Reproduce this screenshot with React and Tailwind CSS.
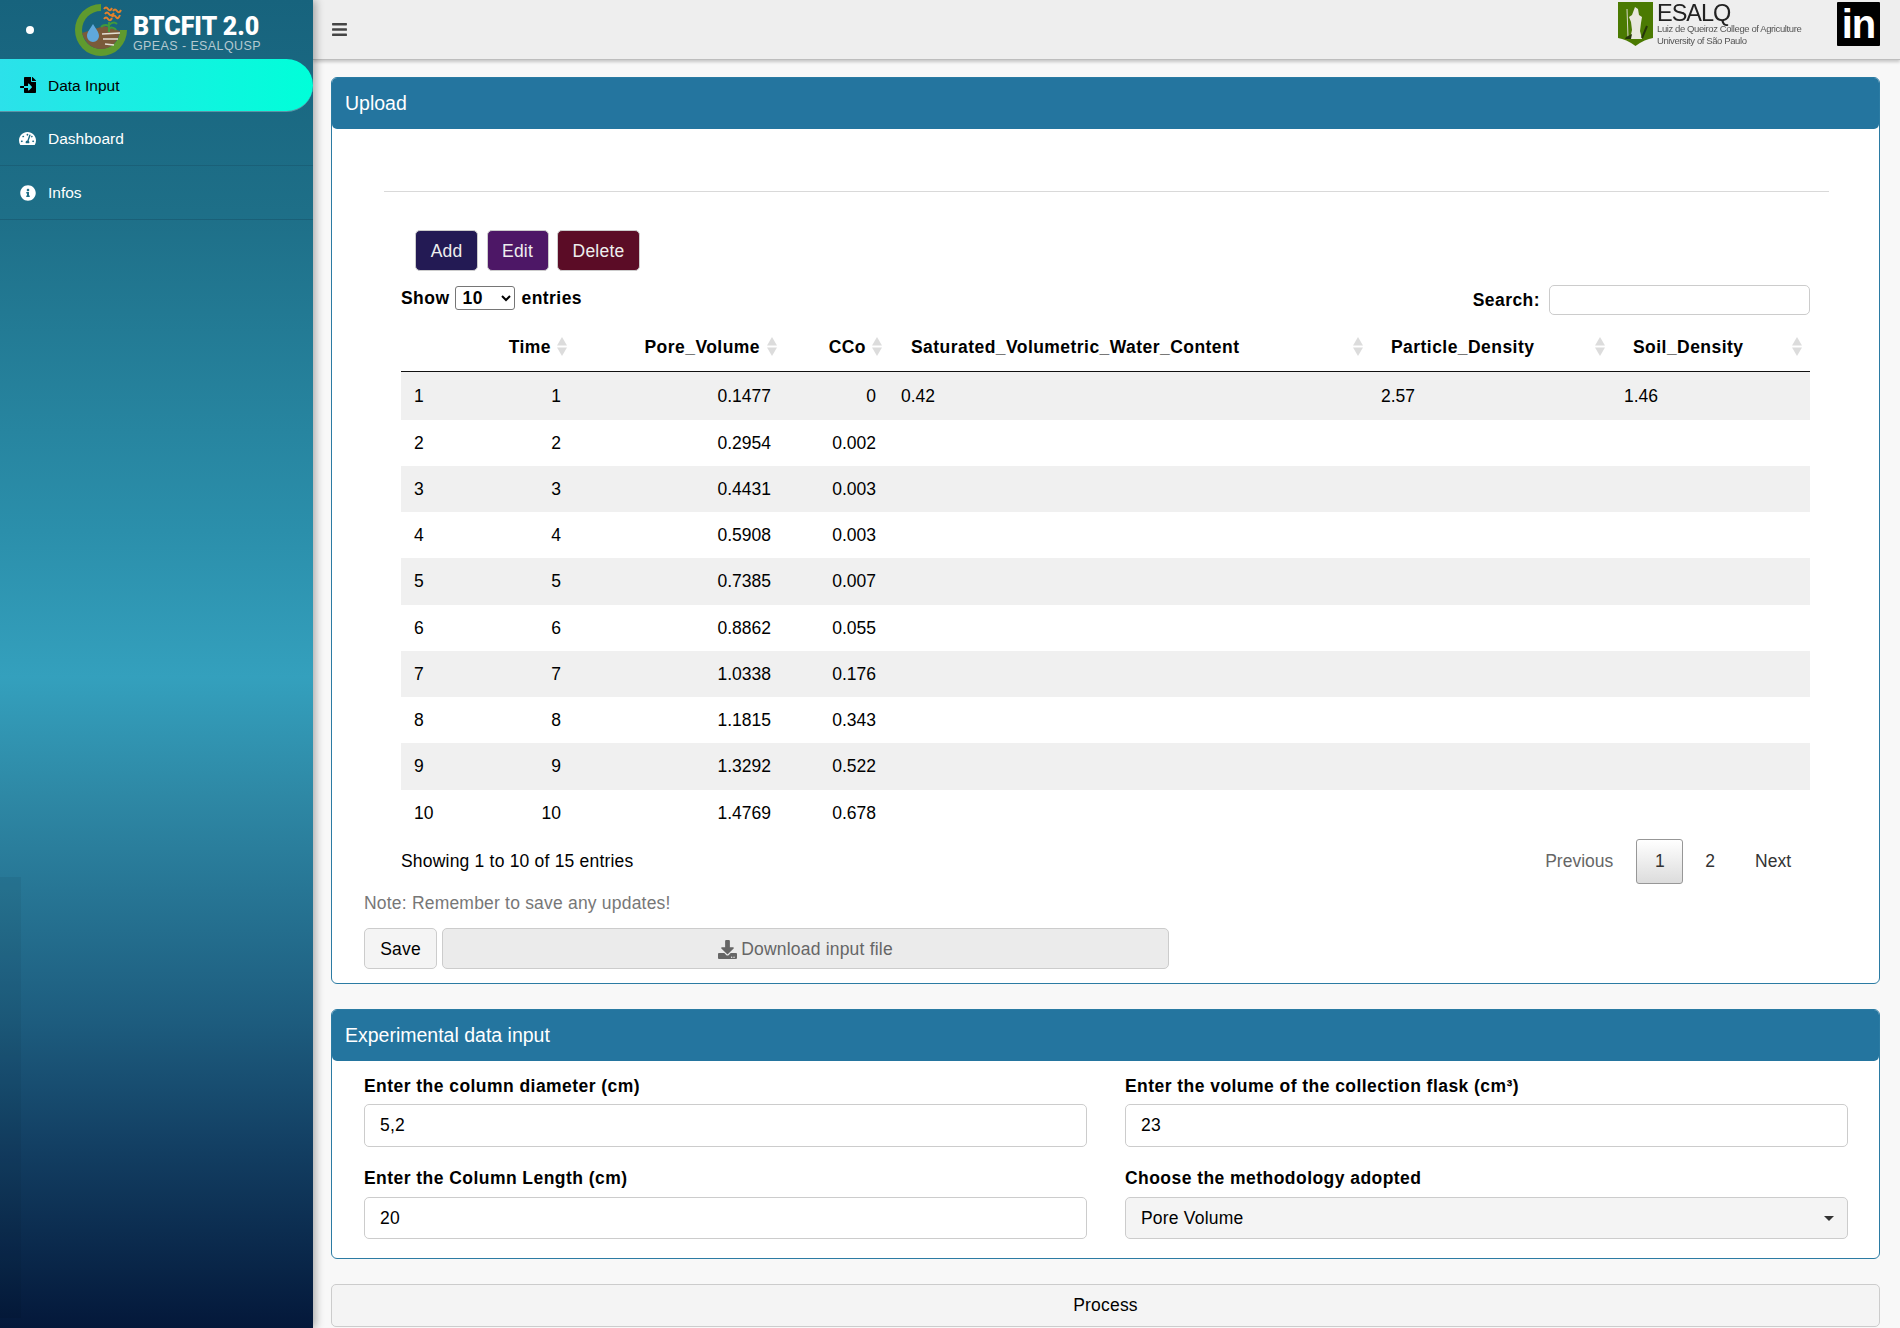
import { FaBars, FaDownload, FaFileImport, FaInfoCircle, FaTachometerAlt } from 'react-icons/fa';

const gridCols = 'grid grid-cols-[74px_100px_210px_105px_481px_242px_197px]';

const rows = [
  ['1', '1', '0.1477', '0', '0.42', '2.57', '1.46'],
  ['2', '2', '0.2954', '0.002'],
  ['3', '3', '0.4431', '0.003'],
  ['4', '4', '0.5908', '0.003'],
  ['5', '5', '0.7385', '0.007'],
  ['6', '6', '0.8862', '0.055'],
  ['7', '7', '1.0338', '0.176'],
  ['8', '8', '1.1815', '0.343'],
  ['9', '9', '1.3292', '0.522'],
  ['10', '10', '1.4769', '0.678'],
];

function BtcfitLogo() {
  return (
    <svg width="54" height="54" viewBox="0 0 54 54" fill="none">
      <path d="M27 1A26 26 0 1 0 53 27L46 27A19 19 0 1 1 27 8Z" fill="#5f9a2e" />
      <path d="M8 30L30 23L46 28C44 40 36 46 27 46C17 46 11 39 8 30Z" fill="#7a5a3a" />
      <path d="M28 31L46 30M29 36L44 36M31 41L40 42" stroke="#e4e0d4" strokeWidth="1.6" />
      <path d="M19 21C22 26 25 29 25 33A6 6 0 0 1 13 33C13 29 16 26 19 21Z" fill="#5fa8dc" />
      <path d="M35 29L35 19M35 23C31 21 29 22 27 24M35 22C38 19 41 19 43 21M35 25C38 24 41 25 42 27" stroke="#3f9a3c" strokeWidth="2" />
      <path d="M30 6Q32 3 34 6T38 5M31 11Q33 8 35 11T40 10M30 16Q32 13 34 16T38 15M39 8Q41 5 43 8T47 7M38 14Q40 11 42 14T46 12" stroke="#e5812a" strokeWidth="2" />
    </svg>
  );
}

function EsalqShield() {
  return (
    <svg width="35" height="44" viewBox="0 0 35 44">
      <path d="M0 0H35V36Q27 37 17.500 44Q8 37 0 36Z" fill="#4b7a02" />
      <path d="M17 5L20 7L21 13L24 15L23 21L22 29L24 37L12 37L14 28L13 20L11 15L14 13Z" fill="#e8e8dc" />
      <path d="M9 7L10 35" stroke="#d8d8c8" strokeWidth="1" />
      <path d="M8 35L14 32L13 37L7 37Z" fill="#26360a" />
      <path d="M24 36L29 24" stroke="#26360a" strokeWidth="2" />
    </svg>
  );
}

function SortIcon() {
  return (
    <svg className="absolute top-[11px] right-[8px]" width="10" height="19" viewBox="0 0 10 19" fill="#dcdcdc">
      <path d="M5 0L10 8.500H0Z" />
      <path d="M0 10.500H10L5 19Z" />
    </svg>
  );
}

function NavItem({ icon, label, active }) {
  if (active) {
    return (
      <div className="flex h-[53px] items-center gap-[12px] rounded-r-[27px] border-b border-[#5d93a6] bg-[linear-gradient(90deg,#2ce1ea,#00ffd9)] pl-[19px] text-black">
        <span className="flex w-[17px] justify-center">{icon}</span>
        <span className="pt-[1px]">{label}</span>
      </div>
    );
  }
  return (
    <div className="flex h-[54px] items-center gap-[12px] border-b border-[#1a6078] pl-[19px] text-white">
      <span className="flex w-[17px] justify-center">{icon}</span>
      <span className="pt-[1px]">{label}</span>
    </div>
  );
}

function Sidebar() {
  return (
    <aside className="relative z-10 h-full w-[313px] shrink-0 bg-[linear-gradient(180deg,#17637d_0%,#1e6f88_16%,#2b8fab_40%,#34a0bd_51%,#2e88a5_60%,#1d5c7e_77%,#134064_86%,#04183a_100%)] text-[15.5px] shadow-[3px_0_8px_rgba(0,0,0,0.3)]">
      <div className="flex h-[59px] items-center">
        <span className="ml-[26px] size-[8px] rounded-full bg-white" />
        <div className="ml-[40px]"><BtcfitLogo /></div>
        <div className="ml-[5px] flex flex-col pt-[8px]">
          <span className="font-['Roboto',sans-serif] text-[25px] leading-[24px] font-black text-white">BTCFIT 2.0</span>
          <span className="text-[12.5px] leading-[14px] tracking-[0.4px] text-[#b4c9d0]">GPEAS - ESALQUSP</span>
        </div>
      </div>
      <NavItem active icon={<FaFileImport size={16} />} label="Data Input" />
      <NavItem icon={<FaTachometerAlt size={17} />} label="Dashboard" />
      <NavItem icon={<FaInfoCircle size={16} />} label="Infos" />
      <div className="absolute bottom-[10px] left-0 h-[441px] w-[21px] bg-black/5" />
    </aside>
  );
}

function TopBar() {
  return (
    <header className="flex h-[60px] shrink-0 items-center border-b border-[#bdbdbd] bg-[#eeeeee] pr-[20px] pl-[18px] shadow-[0_2px_3px_rgba(0,0,0,0.2)]">
      <FaBars size={17} className="text-[#444444]" />
      <div className="ml-auto flex items-start self-start pt-[2px]">
        <EsalqShield />
        <div className="ml-[4px] flex w-[180px] flex-col text-[#555555] blur-[0.3px]">
          <span className="text-[23.5px] leading-[23px] tracking-[-1px] text-[#222222]">ESALQ</span>
          <span className="mt-[-2px] text-[9.5px] leading-[12px] tracking-[-0.4px]">Luiz de Queiroz College of Agriculture</span>
          <span className="text-[9.5px] leading-[11px] tracking-[-0.4px]">University of São Paulo</span>
        </div>
        <div className="flex h-[44px] w-[43px] items-center justify-center rounded-[1px] bg-black text-[40px] leading-[44px] font-bold tracking-[-1px] text-white">
          in
        </div>
      </div>
    </header>
  );
}

function BoxHeader({ title }) {
  return (
    <div className="flex h-[51px] items-center rounded-[5px] bg-[#24759f] pl-[13px] text-[19.5px] tracking-normal text-white">{title}</div>
  );
}

function DataTable() {
  const heads = [
    ['', ''],
    ['Time', 'justify-end pr-[24px]'],
    ['Pore_Volume', 'justify-end pr-[25px]'],
    ['CCo', 'justify-end pr-[24px]'],
    ['Saturated_Volumetric_Water_Content', 'pl-[21px]'],
    ['Particle_Density', 'pl-[20px]'],
    ['Soil_Density', 'pl-[20px]'],
  ];
  return (
    <div>
      <div className={`${gridCols} h-[46px] border-b-[1.5px] border-[#111111] font-bold tracking-[0.45px]`}>
        {heads.map(([label, cls], i) => (
          <div key={i} className={`relative flex h-[42px] items-center ${cls}`}>
            {label}
            {label && <SortIcon />}
          </div>
        ))}
      </div>
      {rows.map((row, r) => (
        <div
          key={r}
          className={`${gridCols} items-center tracking-normal ${r === 0 ? 'h-[47.5px]' : 'h-[46.25px]'} ${r % 2 === 0 ? 'bg-[#f0f0f0]' : ''}`}
        >
          <div className="pl-[13px]">{row[0]}</div>
          <div className="pr-[14px] text-right">{row[1]}</div>
          <div className="pr-[14px] text-right">{row[2]}</div>
          <div className="pr-[14px] text-right">{row[3]}</div>
          <div className="pl-[11px]">{row[4]}</div>
          <div className="pl-[10px]">{row[5]}</div>
          <div className="pl-[11px]">{row[6]}</div>
        </div>
      ))}
    </div>
  );
}

function UploadBox() {
  return (
    <section className="h-[907px] rounded-[6px] border-[1.5px] border-[#2b7ba3] bg-white">
      <BoxHeader title="Upload" />
      <hr className="mt-[62px] mr-[50px] ml-[52px] border-t border-[#d9d9d9]" />
      <div className="mt-[38px] ml-[83px] flex gap-[8.5px] text-[#eeeeee]">
        <button className="h-[41px] w-[63px] rounded-[5px] border border-[#cccccc] bg-[#231a54] pt-[2px]">Add</button>
        <button className="h-[41px] w-[62px] rounded-[5px] border border-[#cccccc] bg-[#4d1766] pt-[2px]">Edit</button>
        <button className="h-[41px] w-[83px] rounded-[5px] border border-[#cccccc] bg-[#5b0c26] pt-[2px]">Delete</button>
      </div>
      <div className="mx-[69px] w-[1409px]">
        <div className="mt-[14px] flex h-[41px] items-start justify-between font-bold tracking-[0.45px]">
          <div className="flex items-center gap-[6px]">
            Show
            <select defaultValue="10" className="h-[24px] w-[60px] rounded-[3px] border border-[#767676] bg-white pl-[2px] font-bold">
              <option>10</option>
              <option>25</option>
            </select>
            entries
          </div>
          <div className="flex items-center gap-[9px]">
            Search:
            <input className="h-[30px] w-[261px] rounded-[5px] border border-[#cccccc] bg-white" />
          </div>
        </div>
        <DataTable />
        <div className="mt-[3px] flex h-[45px] items-center justify-between">
          <span>Showing 1 to 10 of 15 entries</span>
          <div className="mr-[19px] flex items-center tracking-normal">
            <span className="text-[#666666]">Previous</span>
            <span className="ml-[23px] flex h-[45px] w-[47px] items-center justify-center rounded-[3px] border border-[#979797] bg-[linear-gradient(180deg,#ffffff,#dcdcdc)] text-[#333333]">1</span>
            <span className="ml-[22px] text-[#333333]">2</span>
            <span className="ml-[40px] text-[#333333]">Next</span>
          </div>
        </div>
      </div>
      <div className="mt-[7px] ml-[32px] h-[25px] leading-[25px] text-[#777777]">Note: Remember to save any updates!</div>
      <div className="mt-[12px] ml-[32px] flex gap-[5px]">
        <button className="h-[41px] w-[73px] rounded-[5px] border border-[#cccccc] bg-[#f4f4f4] pt-[2px]">Save</button>
        <button className="flex h-[41px] w-[727px] items-center justify-center gap-[4px] rounded-[5px] border border-[#cccccc] bg-[#ebebeb] pt-[2px] text-[#666666]">
          <FaDownload size={19} />
          Download input file
        </button>
      </div>
    </section>
  );
}

function Field({ label, value, low }) {
  return (
    <div>
      <div className="h-[24px] leading-[24px] font-bold tracking-[0.45px]">{label}</div>
      <input
        defaultValue={value}
        className={`block w-full rounded-[5px] border border-[#cccccc] bg-white px-[15px] ${low ? 'mt-[7px] h-[42px] pt-[2px]' : 'mt-[6px] h-[43px]'}`}
      />
    </div>
  );
}

function ExperimentBox() {
  return (
    <section className="mt-[25px] h-[250px] rounded-[6px] border-[1.5px] border-[#2b7ba3] bg-white">
      <BoxHeader title="Experimental data input" />
      <div className="mt-[12.5px] grid grid-cols-2 gap-x-[38px] gap-y-[19px] pr-[31px] pl-[32px]">
        <Field label="Enter the column diameter (cm)" value="5,2" />
        <Field label="Enter the volume of the collection flask (cm³)" value="23" />
        <Field label="Enter the Column Length (cm)" value="20" low />
        <div>
          <div className="h-[24px] leading-[24px] font-bold tracking-[0.45px]">Choose the methodology adopted</div>
          <div className="mt-[7px] flex h-[42px] items-center justify-between rounded-[5px] border border-[#cccccc] bg-[#f4f4f4] pt-[2px] pr-[13px] pl-[15px]">
            Pore Volume
            <span className="border-x-[5px] border-t-[5px] border-x-transparent border-t-[#333333]" />
          </div>
        </div>
      </div>
    </section>
  );
}

export default function App() {
  return (
    <div className="flex h-[1328px] overflow-hidden bg-[#f8f8f8] font-['Liberation_Sans',Arial,sans-serif] text-[17.5px] text-black">
      <Sidebar />
      <div className="flex min-w-0 flex-1 flex-col">
        <TopBar />
        <main className="pt-[17px] pr-[20px] pl-[18px] tracking-[0.2px]">
          <UploadBox />
          <ExperimentBox />
          <button className="mt-[25px] h-[42.5px] w-full rounded-[5px] border border-[#cccccc] bg-[#f4f4f4]">Process</button>
        </main>
      </div>
    </div>
  );
}
